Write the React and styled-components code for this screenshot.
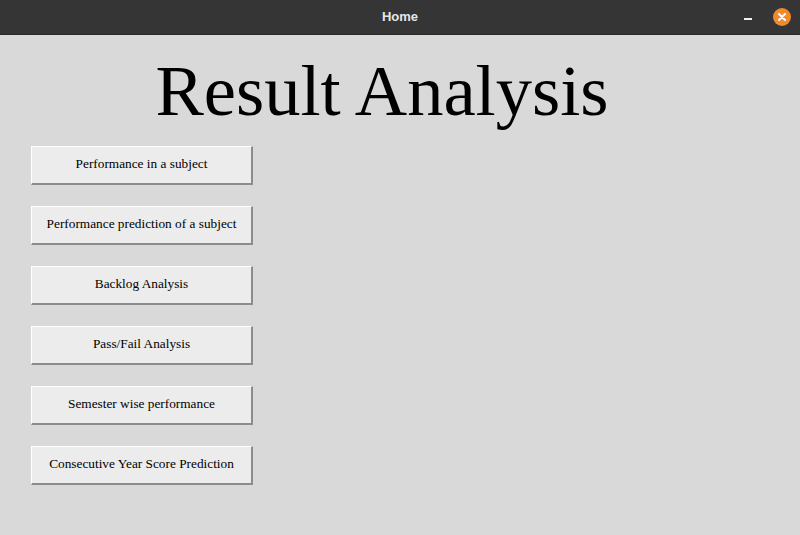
import React from "react";
import styled, { createGlobalStyle } from "styled-components";

const Global = createGlobalStyle`
  html, body { margin: 0; padding: 0; background: #d9d9d9; }
  body { width: 800px; height: 535px; overflow: hidden; }
`;

const Window = styled.div`
  width: 800px;
  height: 535px;
  display: flex;
  flex-direction: column;
  background: #d9d9d9;
`;

const TitleBar = styled.div`
  height: 34px;
  flex: none;
  background: #353535;
  border-bottom: 1px solid #2a2a2a;
  display: grid;
  grid-template-columns: 1fr auto 1fr;
  align-items: center;
`;

const Title = styled.div`
  grid-column: 2;
  font-family: "Liberation Sans", Arial, sans-serif;
  font-weight: bold;
  font-size: 13px;
  color: #e6e6e6;
  padding-bottom: 1px;
`;

const Controls = styled.div`
  grid-column: 3;
  justify-self: end;
  display: flex;
  align-items: center;
  gap: 21px;
  padding-right: 9px;
`;

const MinBtn = styled.div`
  width: 8px;
  height: 2px;
  background: #f0f0f0;
  margin-top: 4px;
`;

const CloseBtn = styled.div`
  width: 18px;
  height: 18px;
  border-radius: 50%;
  background: #f08a2c;
  display: flex;
  align-items: center;
  justify-content: center;
`;

const Content = styled.div`
  flex: 1;
  display: flex;
  flex-direction: column;
  padding: 11px 0 0 31px;
`;

const Heading = styled.h1`
  margin: 0;
  width: 702px;
  text-align: center;
  font-family: "Liberation Serif", "Times New Roman", serif;
  font-weight: normal;
  font-size: 72.5px;
  line-height: 90px;
  color: #000;
`;

const ButtonList = styled.div`
  display: flex;
  flex-direction: column;
  gap: 21px;
  margin-top: 10px;
`;

const Button = styled.button`
  width: 222px;
  height: 39px;
  box-sizing: border-box;
  background: #ececec;
  border: 1px solid;
  border-color: #ffffff #8c8c8c #8c8c8c #ffffff;
  border-width: 1px 2px 2px 1px;
  font-family: "Liberation Serif", "Times New Roman", serif;
  font-size: 13.3px;
  color: #000;
  padding: 0 0 3px 0;
  margin: 0;
  cursor: pointer;
`;

const items = [
  "Performance in a subject",
  "Performance prediction of a subject",
  "Backlog Analysis",
  "Pass/Fail Analysis",
  "Semester wise performance",
  "Consecutive Year Score Prediction",
];

export default function App() {
  return (
    <Window>
      <Global />
      <TitleBar>
        <Title>Home</Title>
        <Controls>
          <MinBtn />
          <CloseBtn>
            <svg width="10" height="10" viewBox="0 0 10 10">
              <path d="M2 2 L8 8 M8 2 L2 8" stroke="#fff" strokeWidth="2" strokeLinecap="round" />
            </svg>
          </CloseBtn>
        </Controls>
      </TitleBar>
      <Content>
        <Heading>Result Analysis</Heading>
        <ButtonList>
          {items.map((t) => (
            <Button key={t}>{t}</Button>
          ))}
        </ButtonList>
      </Content>
    </Window>
  );
}
